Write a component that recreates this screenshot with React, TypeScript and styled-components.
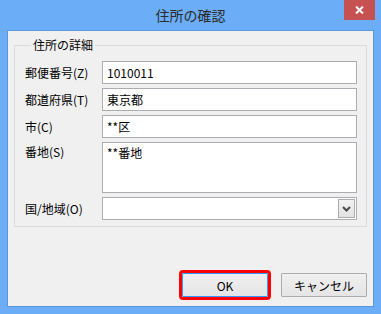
import React from "react";
import styled, { createGlobalStyle } from "styled-components";

const Global = createGlobalStyle`
  html, body { margin: 0; padding: 0; }
  body {
    background: #6badf6;
    font-family: "Noto Sans CJK JP", "Noto Sans", sans-serif;
    font-size: 12px;
  }
  * { box-sizing: border-box; }
`;

const Window = styled.div`
  width: 381px;
  height: 314px;
  background: #6badf6;
  display: flex;
  flex-direction: column;
`;

const TitleBar = styled.div`
  height: 30px;
  display: grid;
  grid-template-columns: 1fr auto 1fr;
  align-items: start;
  flex: none;
`;

const Title = styled.div`
  grid-column: 2;
  font-size: 14px;
  line-height: 30px;
  color: #2a2a2a;
`;

const CloseButton = styled.div`
  grid-column: 3;
  justify-self: end;
  width: 31px;
  height: 20px;
  margin-right: 6px;
  background: #c75050;
  display: flex;
  align-items: center;
  justify-content: center;
`;

const Client = styled.div`
  flex: 1;
  margin: 0 7px 7px 7px;
  border: 1px solid #5a98de;
  background: #f0f0f0;
  padding: 6px 6px 0 6px;
  display: flex;
  flex-direction: column;
`;

const Group = styled.fieldset`
  margin: 0;
  border: 1px solid #dcdcdc;
  padding: 8px 9px 6px 10px;
  min-width: 0;
`;

const GroupTitle = styled.legend`
  margin-left: 6px;
  padding: 0 2px;
  line-height: 16px;
  font-size: 12px;
  color: #000;
`;

const Form = styled.div`
  display: grid;
  grid-template-columns: 77px 1fr;
  grid-template-rows: 23px 23px 23px 51px 23px;
  row-gap: 4px;
`;

const Label = styled.label<{ $top?: boolean }>`
  align-self: ${(p) => (p.$top ? "start" : "center")};
  padding-top: ${(p) => (p.$top ? "2px" : "0")};
  font-size: 12px;
  line-height: 16px;
  color: #000;
  white-space: nowrap;
`;

const TextBox = styled.input`
  width: 100%;
  height: 23px;
  margin: 0;
  border: 1px solid #abadb3;
  background: #fff;
  padding: 0 4px;
  font-family: inherit;
  font-size: 12px;
  color: #000;
  outline: none;
`;

const TextArea = styled.textarea`
  width: 100%;
  height: 51px;
  margin: 0;
  border: 1px solid #abadb3;
  background: #fff;
  padding: 2px 4px;
  font-family: inherit;
  font-size: 12px;
  line-height: 16px;
  color: #000;
  resize: none;
  outline: none;
`;

const Combo = styled.div`
  height: 23px;
  border: 1px solid #abadb3;
  background: #fff;
  display: flex;
  justify-content: flex-end;
  align-items: center;
  padding: 1px 1px 1px 0;
`;

const DropButton = styled.div`
  width: 17px;
  height: 19px;
  border: 1px solid #acacac;
  background: linear-gradient(#f2f2f2, #e3e3e3);
  display: flex;
  align-items: center;
  justify-content: center;
`;

const ButtonRow = styled.div`
  margin-top: 46px;
  display: flex;
  justify-content: flex-end;
  gap: 13px;
  padding-right: 0;
`;

const Button = styled.div<{ $default?: boolean; $marked?: boolean }>`
  width: 86px;
  height: 24px;
  border: 1px solid ${(p) => (p.$default ? "#3399ff" : "#acacac")};
  background: linear-gradient(#f0f0f0, #e5e5e5);
  display: flex;
  align-items: center;
  justify-content: center;
  font-size: 12px;
  color: #000;
  outline: ${(p) => (p.$marked ? "3px solid #ff0000" : "none")};
  outline-offset: 0;
  border-radius: 1px;
`;

export default function App() {
  return (
    <>
      <Global />
      <Window>
        <TitleBar>
          <Title>住所の確認</Title>
          <CloseButton>
            <svg width="9" height="8" viewBox="0 0 9 8">
              <path d="M1 0.5 L8 7.5 M8 0.5 L1 7.5" stroke="#fff" strokeWidth="2" />
            </svg>
          </CloseButton>
        </TitleBar>
        <Client>
          <Group>
            <GroupTitle>住所の詳細</GroupTitle>
            <Form>
              <Label>郵便番号(Z)</Label>
              <TextBox readOnly value="1010011" />
              <Label>都道府県(T)</Label>
              <TextBox readOnly value="東京都" />
              <Label>市(C)</Label>
              <TextBox readOnly value="**区" />
              <Label $top>番地(S)</Label>
              <TextArea readOnly value="**番地" />
              <Label>国/地域(O)</Label>
              <Combo>
                <DropButton>
                  <svg width="9" height="6" viewBox="0 0 9 6">
                    <path d="M1 1 L4.5 4.5 L8 1" stroke="#4a4a4a" strokeWidth="2" fill="none" />
                  </svg>
                </DropButton>
              </Combo>
            </Form>
          </Group>
          <ButtonRow>
            <Button $default $marked>OK</Button>
            <Button>キャンセル</Button>
          </ButtonRow>
        </Client>
      </Window>
    </>
  );
}
